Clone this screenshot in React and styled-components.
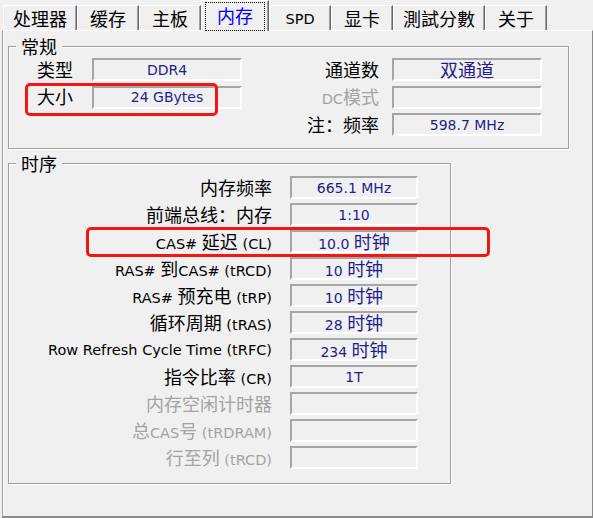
import React from 'react';
import styled, { createGlobalStyle } from 'styled-components';

const GlobalStyle = createGlobalStyle`
  html, body { margin: 0; padding: 0; background: #f0f0f0; }
  body { font-family: "DejaVu Sans", "Noto Sans CJK SC", sans-serif; }
`;

const Window = styled.div`
  position: relative;
  width: 593px;
  height: 518px;
  background: #f0f0f0;
  overflow: hidden;
  display: flex;
  flex-direction: column;
  font-family: "DejaVu Sans", "Noto Sans CJK SC", sans-serif;
  font-size: 14.5px;
  color: #000;
`;

const Han = styled.span`
  font-family: "Noto Sans CJK SC", sans-serif;
  font-size: 18px;
  line-height: 1;
`;

const Run = styled.span`
  white-space: pre;
`;

const HAN_RE = /([\u2E80-\u9FFF\uFF00-\uFFEF\u3000-\u303F]+)/;
function Txt({ children }) {
  const parts = String(children).split(HAN_RE);
  return (
    <Run>
      {parts.map((p, i) => (i % 2 === 1 ? <Han key={i}>{p}</Han> : p))}
    </Run>
  );
}

const TabBar = styled.div`
  display: flex;
  align-items: flex-end;
  height: 30px;
  padding-left: 3px;
  position: relative;
  z-index: 2;
`;

const Tab = styled.div`
  box-sizing: border-box;
  min-width: ${(p) => (p.$active ? 67 : 62)}px;
  height: ${(p) => (p.$active ? 31 : 25)}px;
  margin-bottom: ${(p) => (p.$active ? -1 : 0)}px;
  padding: ${(p) => (p.$active ? '0 4px' : '2px 9px 0')};
  display: flex;
  align-items: center;
  justify-content: center;
  background: #f0f0f0;
  border-top: 1px solid #ffffff;
  border-left: 1px solid #ffffff;
  border-right: 1px solid #696969;
  box-shadow: inset -1px 0 0 #a0a0a0;
  color: ${(p) => (p.$active ? '#0000ff' : '#000')};
  white-space: nowrap;
  line-height: 18px;
`;

const Focus = styled.span`
  outline: 1px dotted #000;
  outline-offset: 0;
  padding: 3px 11px;
  line-height: 18px;
`;

const Panel = styled.div`
  flex: 1;
  margin-left: 2px;
  border-top: 1px solid #ffffff;
  border-left: 1px solid #a0a0a0;
  border-right: 1px solid #8a8a8a;
  border-bottom: 2px solid #8a8a8a;
  box-shadow: inset 1px 0 0 #ffffff;
  padding: 6px 0 0 5px;
  display: flex;
  flex-direction: column;
  align-items: flex-start;
`;

const Group = styled.fieldset`
  box-sizing: border-box;
  width: ${(p) => p.$width}px;
  margin: ${(p) => p.$top}px 0 0;
  padding: 0;
  border: 1px solid #a0a0a0;
  box-shadow: inset 1px 1px 0 #ffffff, 1px 1px 0 #ffffff;
  min-width: 0;
`;

const Legend = styled.legend`
  margin-left: 7px;
  padding: 0 5px;
  line-height: 18px;
  height: 18px;
  background: #f0f0f0;
  position: relative;
`;

const GeneralGrid = styled.div`
  display: grid;
  grid-template-columns: 55px 150px 1fr 150px;
  grid-auto-rows: 23px;
  row-gap: 4.5px;
  padding: 3px 26px 12px 28px;
`;

const TimingGrid = styled.div`
  display: grid;
  grid-template-columns: 1fr 128px;
  grid-auto-rows: 23px;
  column-gap: 18px;
  row-gap: 4px;
  padding: 4px 32px 14px 0;
`;

const Label = styled.div`
  grid-column: ${(p) => p.$col || 'auto'};
  display: flex;
  align-items: center;
  justify-content: ${(p) => (p.$left ? 'flex-start' : 'flex-end')};
  padding-right: ${(p) => p.$pad || 0}px;
  color: ${(p) => (p.$disabled ? '#a3a3a3' : '#000')};
  white-space: nowrap;
  font-size: 14.5px;
`;

const Value = styled.div`
  grid-column: ${(p) => p.$col || 'auto'};
  box-sizing: border-box;
  height: 23px;
  border-style: solid;
  border-width: 2px;
  border-color: #a5a5a5 #ffffff #ffffff #a5a5a5;
  display: flex;
  align-items: center;
  justify-content: center;
  color: #1e1e8c;
  font-size: 14px;
  white-space: nowrap;
`;

const Highlight = styled.div`
  position: absolute;
  left: ${(p) => p.$x}px;
  top: ${(p) => p.$y}px;
  width: ${(p) => p.$w}px;
  height: ${(p) => p.$h}px;
  box-sizing: border-box;
  border: 3px solid #f41515;
  border-radius: 5px;
  pointer-events: none;
  z-index: 5;
`;

const tabs = ['处理器', '缓存', '主板', '内存', 'SPD', '显卡', '測試分數', '关于'];

const general = [
  { l: '类型', v: 'DDR4', r: '通道数', rv: '双通道' },
  { l: '大小', v: '24 GBytes', r: 'DC模式', rv: '', rd: true },
  { r: '注：频率', rv: '598.7 MHz' },
];

const timings = [
  ['内存频率', '665.1 MHz'],
  ['前端总线：内存', '1:10'],
  ['CAS# 延迟 (CL)', '10.0 时钟'],
  ['RAS# 到CAS# (tRCD)', '10 时钟'],
  ['RAS# 预充电 (tRP)', '10 时钟'],
  ['循环周期 (tRAS)', '28 时钟'],
  ['Row Refresh Cycle Time (tRFC)', '234 时钟'],
  ['指令比率 (CR)', '1T'],
  ['内存空闲计时器', '', true],
  ['总CAS号 (tRDRAM)', '', true],
  ['行至列 (tRCD)', '', true],
];

export default function App() {
  return (
    <Window>
      <GlobalStyle />
      <TabBar>
        {tabs.map((t) => (
          <Tab key={t} $active={t === '内存'}>
            {t === '内存' ? (
              <Focus>
                <Txt>{t}</Txt>
              </Focus>
            ) : (
              <Txt>{t}</Txt>
            )}
          </Tab>
        ))}
      </TabBar>
      <Panel>
        <Group $width={561} $top={0}>
          <Legend>
            <Txt>常规</Txt>
          </Legend>
          <GeneralGrid>
            {general.map((row, i) => (
              <React.Fragment key={i}>
                {row.l ? (
                  <>
                    <Label $left $col="1">
                      <Txt>{row.l}</Txt>
                    </Label>
                    <Value $col="2">
                      <Txt>{row.v}</Txt>
                    </Value>
                  </>
                ) : null}
                <Label $col="3" $pad={13} $disabled={row.rd}>
                  <Txt>{row.r}</Txt>
                </Label>
                <Value $col="4">
                  <Txt>{row.rv}</Txt>
                </Value>
              </React.Fragment>
            ))}
          </GeneralGrid>
        </Group>
        <Group $width={443} $top={5}>
          <Legend>
            <Txt>时序</Txt>
          </Legend>
          <TimingGrid>
            {timings.map(([l, v, d]) => (
              <React.Fragment key={l}>
                <Label $disabled={d}>
                  <Txt>{l}</Txt>
                </Label>
                <Value>
                  <Txt>{v}</Txt>
                </Value>
              </React.Fragment>
            ))}
          </TimingGrid>
        </Group>
      </Panel>
      <Highlight $x={25} $y={83} $w={193} $h={33} />
      <Highlight $x={86} $y={227} $w={404} $h={30} />
    </Window>
  );
}
